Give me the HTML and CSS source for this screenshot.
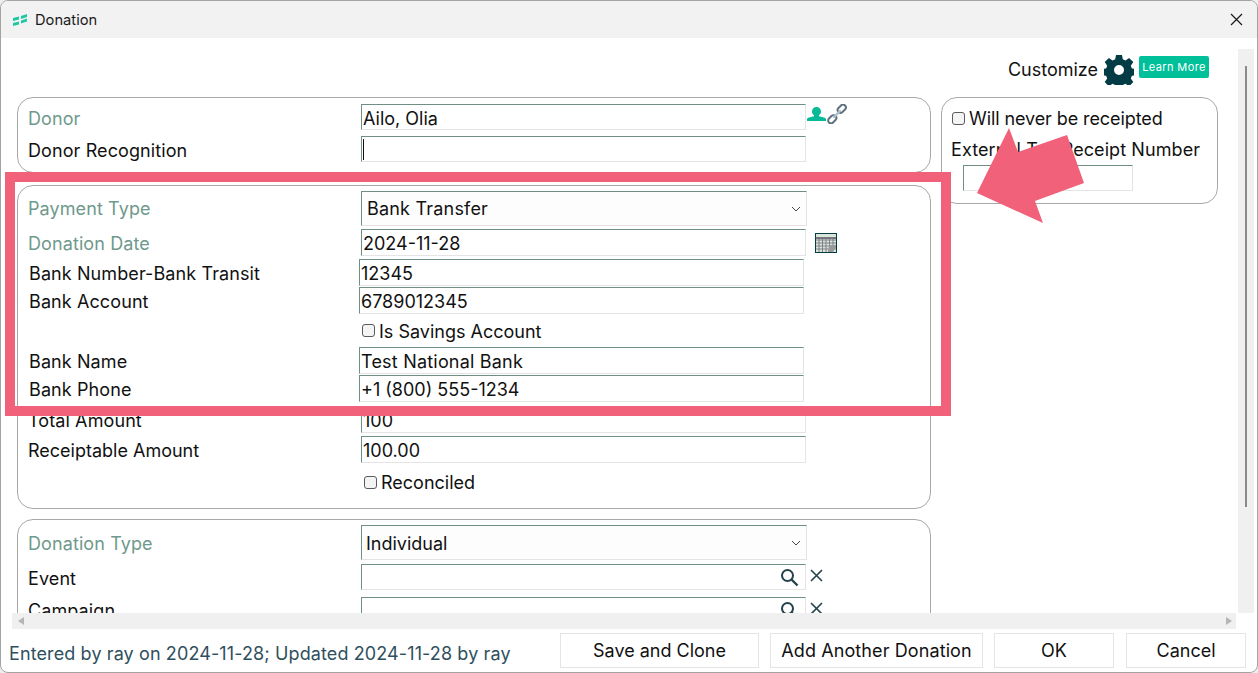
FILE: index.html
```html
<!DOCTYPE html>
<html lang="en">
<head>
<meta charset="utf-8">
<title>Donation</title>
<link rel="stylesheet" href="styles.css">
</head>
<body>
<div class="window">
  <header class="titlebar">
    <svg class="logo" width="15" height="12" viewBox="0 0 15 12"><path d="M0 4l6-1.500v3L0 7zM8 2l6-2v3L8 5zM0 9l6-1.500v3L0 12zM8 6.500l6-2v3l-6 2z" fill="#1fc8a4"/></svg>
    <span class="title">Donation</span>
    <svg class="close" width="13" height="13" viewBox="0 0 13 13"><path d="M1 1l11 11M12 1l-11 11" stroke="#1a1a1a" stroke-width="1.200" fill="none"/></svg>
  </header>
  <div class="main">
    <div class="viewport">
      <div class="customize">
        <span>Customize</span>
        <svg class="gear" width="30" height="30" viewBox="0 0 30 30"><path fill="#033c45" fill-rule="evenodd" d="M12 0h6l.8 4.300 2.700 1.100 3.600-2.500 4.200 4.200-2.500 3.600 1.100 2.700 4.100.6v6l-4.100.8-1.100 2.700 2.500 3.600-4.200 4.200-3.600-2.500-2.700 1.100-.8 4.100h-6l-.8-4.100-2.700-1.100-3.600 2.500-4.200-4.200 2.500-3.600-1.100-2.700-4.100-.8v-6l4.100-.6 1.100-2.700-2.500-3.600 4.200-4.200 3.600 2.500 2.700-1.100zM15 10a5 5 0 1 0 0 10 5 5 0 0 0 0-10z"/></svg>
        <a class="learn">Learn More</a>
      </div>
      <div class="columns">
        <div class="left">
          <section class="group g-donor">
            <div class="row">
              <label class="lbl req">Donor</label>
              <div class="field">Ailo, Olia</div>
              <svg class="ico-person" width="19" height="14" viewBox="0 0 19 14"><path d="M9.500 0c2.700 0 4.500 1.900 4.500 4.500 0 1.700-.8 3-2 3.800v1c2.500.6 5.800 1.100 7 2.500V14H0v-2.200c1.200-1.400 4.500-1.900 7-2.500v-1C5.800 7.500 5 6.200 5 4.500 5 1.900 6.800 0 9.500 0z" fill="#07b996"/></svg>
              <svg class="ico-link" width="20" height="20" viewBox="0 0 20 20"><g fill="none" stroke-linecap="round"><path d="M14 1.500l-2.500 2.500a2.800 2.800 0 0 0 4 4L18 5.500a2.800 2.800 0 0 0-4-4zM4.500 12l-2.500 2.500a2.800 2.800 0 0 0 4 4L8.500 16a2.800 2.800 0 0 0-4-4z" stroke="#5f7280" stroke-width="2"/><path d="M7 13l6-6" stroke="#a9bfce" stroke-width="2.400"/></g></svg>
            </div>
            <div class="row gap6">
              <label class="lbl">Donor Recognition</label>
              <div class="field"><span class="caret"></span></div>
            </div>
          </section>
          <section class="group g-payment">
            <div class="row">
              <label class="lbl req">Payment Type</label>
              <div class="select"><span>Bank Transfer</span><svg width="10" height="6" viewBox="0 0 10 6"><path d="M1 1l4 4 4-4" stroke="#444" fill="none"/></svg></div>
            </div>
            <div class="row gap3">
              <label class="lbl req">Donation Date</label>
              <div class="field">2024-11-28</div>
              <svg class="ico-cal" width="22" height="20" viewBox="0 0 22 20"><rect x=".5" y=".5" width="21" height="19" fill="#d8e6dc" stroke="#033c45"/><rect x="1" y="4" width="20" height="2" fill="#77757f"/><path d="M1 7h20M1 10h20M1 13h20M1 16h20M4 6v13M7.500 6v13M11 6v13M14.500 6v13M18 6v13" stroke="#7f8088" fill="none"/><path d="M13 19l1-7h7v3l-4 4z" fill="#9a9a98"/></svg>
            </div>
            <div class="row bank gap3">
              <label class="lbl">Bank Number-Bank Transit</label>
              <div class="field">12345</div>
            </div>
            <div class="row bank gap1">
              <label class="lbl">Bank Account</label>
              <div class="field">6789012345</div>
            </div>
            <div class="row check-row bank">
              <label class="lbl"></label>
              <label class="check"><input type="checkbox" class="cb"><span>Is Savings Account</span></label>
            </div>
            <div class="row bank">
              <label class="lbl">Bank Name</label>
              <div class="field wider">Test National Bank</div>
            </div>
            <div class="row bank gap1">
              <label class="lbl">Bank Phone</label>
              <div class="field">+1 (800) 555-1234</div>
            </div>
            <div class="row gap4">
              <label class="lbl">Total Amount</label>
              <div class="field">100</div>
            </div>
            <div class="row gap3">
              <label class="lbl tight">Receiptable Amount</label>
              <div class="field">100.00</div>
            </div>
            <div class="row check-row last">
              <label class="lbl"></label>
              <label class="check"><input type="checkbox" class="cb"><span>Reconciled</span></label>
            </div>
          </section>
          <section class="group g-type">
            <div class="row">
              <label class="lbl req">Donation Type</label>
              <div class="select"><span>Individual</span><svg width="10" height="6" viewBox="0 0 10 6"><path d="M1 1l4 4 4-4" stroke="#444" fill="none"/></svg></div>
            </div>
            <div class="row gap4">
              <label class="lbl">Event</label>
              <div class="field search"><svg width="19" height="19" viewBox="0 0 19 19"><circle cx="7.500" cy="7.500" r="5.500" fill="none" stroke="#24424a" stroke-width="2"/><path d="M11.500 11.500l6 6" stroke="#24424a" stroke-width="2.400"/></svg></div>
              <svg class="ico-x" width="13" height="13" viewBox="0 0 13 13"><path d="M1 1l11 11M12 1L1 12" stroke="#24424a" stroke-width="1.600"/></svg>
            </div>
            <div class="row gap7">
              <label class="lbl">Campaign</label>
              <div class="field search"><svg width="19" height="19" viewBox="0 0 19 19"><circle cx="7.500" cy="7.500" r="5.500" fill="none" stroke="#24424a" stroke-width="2"/><path d="M11.500 11.500l6 6" stroke="#24424a" stroke-width="2.400"/></svg></div>
              <svg class="ico-x" width="13" height="13" viewBox="0 0 13 13"><path d="M1 1l11 11M12 1L1 12" stroke="#24424a" stroke-width="1.600"/></svg>
            </div>
          </section>
        </div>
        <aside class="group g-receipt">
          <label class="check"><input type="checkbox" class="cb"><span>Will never be receipted</span></label>
          <div class="ext-label">External Tax Receipt Number</div>
          <div class="field ext-field"></div>
        </aside>
      </div>
    </div>
    <div class="vbar"><span class="vthumb"></span></div>
  </div>
  <div class="hbar">
    <svg width="6" height="8" viewBox="0 0 6 8"><path d="M6 0v8L0 4z" fill="#b5b5b5"/></svg>
    <svg width="6" height="8" viewBox="0 0 6 8"><path d="M0 0v8l6-4z" fill="#b5b5b5"/></svg>
  </div>
  <footer class="footer">
    <span class="status">Entered by ray on 2024-11-28; Updated 2024-11-28 by ray</span>
    <button class="btn b-clone">Save and Clone</button>
    <button class="btn b-add">Add Another Donation</button>
    <button class="btn b-ok">OK</button>
    <button class="btn b-cancel">Cancel</button>
  </footer>
  <div class="highlight"></div>
  <svg class="arrow" width="120" height="110" viewBox="0 0 120 110"><polygon points="32,8 41,32 90,15 107,63 58,81 66,103 0,73" fill="#f1617a"/></svg>
</div>
</body>
</html>
```

FILE: styles.css
```css
* { box-sizing: border-box; }
html, body { margin: 0; padding: 0; height: 100%; background: #eeeeee; overflow: hidden; }
body { font-family: Inter, "Liberation Sans", sans-serif; font-size: 18px; color: #111; }

.window {
  position: relative;
  width: 1258px;
  height: 673px;
  background: #fff;
  border: 1px solid #a3a3a3;
  border-radius: 8px;
  display: flex;
  flex-direction: column;
  overflow: hidden;
}

.titlebar {
  height: 37px;
  flex: none;
  background: #f2f2f2;
  display: flex;
  align-items: center;
  padding: 0 14px 0 12px;
}
.logo { margin-right: 7px; }
.title { font-size: 14.7px; color: #1a1a1a; }
.close { margin-left: auto; }

.main { flex: 1; min-height: 0; display: flex; }
.viewport { flex: 1; min-width: 0; overflow: hidden; }

.customize {
  height: 59px;
  display: flex;
  align-items: flex-start;
  justify-content: flex-end;
  padding: 17px 29px 0 0;
}
.customize > span { line-height: 30px; }
.gear { margin: 0 5px 0 6px; }
.learn {
  background: #00c09a;
  color: #fff;
  font-size: 11px;
  letter-spacing: .4px;
  height: 22px;
  width: 70px;
  margin-top: 1px;
  border-radius: 2px;
  display: flex;
  align-items: center;
  justify-content: center;
}

.columns { display: flex; align-items: flex-start; padding-left: 16px; gap: 10px; }
.left { width: 914px; flex: none; }

.group { border: 1px solid #a8a8a8; border-radius: 16px; background: #fff; }
.g-donor { height: 76px; padding: 6px 0 0 10px; margin-bottom: 12px; }
.g-payment { height: 324px; padding: 5px 0 0 10px; margin-bottom: 10px; }
.g-type { height: 300px; padding: 5px 0 0 10px; }
.g-receipt { width: 277px; height: 107px; padding: 0 0 0 9px; }

.row { display: flex; align-items: center; }
.gap1 { margin-top: 1px; }
.gap3 { margin-top: 3px; }
.gap4 { margin-top: 4px; }
.gap6 { margin-top: 6px; }
.gap7 { margin-top: 7px; }

.lbl { width: 333px; flex: none; line-height: 26px; letter-spacing: .1px; }
.tight { letter-spacing: 0; }
.req { color: #6f998c; }
.bank .lbl { width: 331px; padding-left: 1px; }
.g-donor .row { height: 26px; }
.g-donor .lbl { margin-top: 4px; }
.g-payment .row { height: 27px; }
.g-payment .row:first-child { height: 35px; }
.g-payment .check-row { height: 33px; }
.g-payment .check-row.last { height: 38px; }
.g-payment .row:not(:first-child) .lbl { margin-top: 2px; }
.g-type .row { height: 26px; }
.g-type .row:first-child { height: 35px; }
.g-type .lbl { margin-top: 4px; }
.g-type .row:first-child .lbl { margin-top: 2px; }
.g-type .row:last-child .lbl { margin-top: 2px; }

.field {
  width: 445px;
  height: 26px;
  flex: none;
  border: 1px solid #e4e4e4;
  border-top-color: #6d8f86;
  border-left-color: #6d8f86;
  padding-left: 1px;
  line-height: 28px;
  position: relative;
}
.g-payment .field { height: 27px; line-height: 27px; }
.wider { letter-spacing: .2px; }
.caret { display: block; width: 1px; height: 21px; margin-top: 2px; background: #111; }

.select {
  height: 35px;
  flex: none;
  width: 446px;
  border: 1px solid #e4e4e4;
  border-top-color: #6d8f86;
  border-left-color: #6d8f86;
  background: #fdfdfd;
  display: flex;
  align-items: center;
  justify-content: space-between;
  padding: 0 5px;
}
.g-payment .select span { letter-spacing: .2px; }
.g-type .select { padding: 1px 5px 0 4px; }

.search { display: flex; align-items: center; justify-content: flex-end; padding-right: 6px; }

.check { display: flex; align-items: center; line-height: 24px; }
.check span { margin-top: 2px; }
.cb {
  appearance: none;
  width: 13px;
  height: 13px;
  margin: 0 4px 0 3px;
  border: 1px solid #5a5a5a;
  border-radius: 3px;
  background: #f4f4f4;
}

.ico-person { margin: -6px 0 0 1px; flex: none; }
.ico-link { margin: -6px 0 0 1px; flex: none; }
.ico-cal { margin-left: 9px; }
.ico-x { margin: -4px 0 0 4px; }

.g-receipt .check { margin-top: 8px; margin-left: -2px; height: 24px; letter-spacing: -.09px; }
.ext-label { margin-top: 8px; line-height: 24px; letter-spacing: .08px; }
.ext-field { width: 170px; margin: 3px 0 0 12px; }

.vbar {
  width: 16px;
  margin: 11px 3px 0 0;
  flex: none;
  background: #f0f0f0;
  display: flex;
  justify-content: center;
  align-items: flex-start;
}
.vthumb { display: block; width: 2px; height: 441px; margin-top: 17px; background: #8a8a8a; }

.hbar {
  height: 16px;
  flex: none;
  margin: 0 21px 0 11px;
  background: #f0f0f0;
  display: flex;
  align-items: center;
  justify-content: space-between;
  padding: 0 4px 0 6px;
}

.footer { height: 43px; flex: none; display: flex; align-items: center; position: relative; padding: 0 11px 0 8px; }
.status { color: #2f4f5e; margin-right: auto; margin-top: 6px; letter-spacing: .11px; }
.btn {
  font: inherit;
  color: #111;
  height: 35px;
  background: #fff;
  border: 1px solid #e4e4e4;
  padding: 0;
  flex: none;
}
.b-clone { width: 199px; }
.b-add { width: 213px; margin-left: 11px; letter-spacing: .1px; }
.b-ok { width: 120px; margin-left: 11px; }
.b-cancel { width: 120px; margin-left: 12px; }

.highlight {
  position: absolute;
  left: 4px;
  top: 171px;
  width: 946px;
  height: 244px;
  border: 10px solid #f1617a;
  pointer-events: none;
}
.arrow { position: absolute; left: 976px; top: 119px; pointer-events: none; }
```
